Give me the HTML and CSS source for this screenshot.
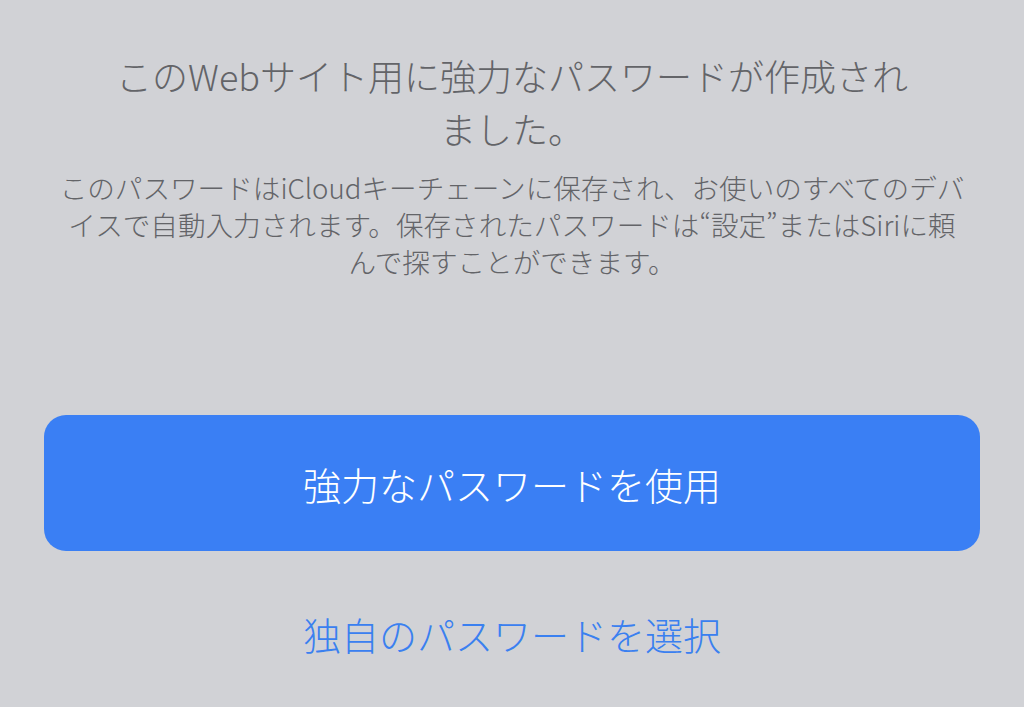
FILE: index.html
```html
<!DOCTYPE html>
<html lang="ja">
<head>
    <meta charset="UTF-8">
    <meta name="viewport" content="width=device-width, initial-scale=1.0">
    <title>強力なパスワード</title>
    <link rel="stylesheet" href="styles.css">
</head>
<body>
    <div class="sheet">
        <div class="message">
            <h1 class="title">このWebサイト用に強力なパスワードが作成され<br>ました。</h1>
            <p class="detail">このパスワードはiCloudキーチェーンに保存され、お使いのすべてのデバ<br>イスで自動入力されます。保存されたパスワードは“設定”またはSiriに頼<br>んで探すことができます。</p>
        </div>
        <div class="actions">
            <button class="primary">強力なパスワードを使用</button>
            <button class="link">独自のパスワードを選択</button>
        </div>
    </div>
</body>
</html>
```

FILE: styles.css
```css
body, html {
    height: 100%;
    margin: 0;
    padding: 0;
    font-family: "Noto Sans CJK JP", "Noto Sans", sans-serif;
    background-color: #d1d2d6;
}
.sheet {
    display: flex;
    flex-direction: column;
    height: 100%;
    box-sizing: border-box;
    padding: 49px 44px 0;
}
.message {
    text-align: center;
    color: #636468;
}
.title {
    margin: 0;
    font-size: 36px;
    font-weight: 300;
    line-height: 53px;
}
.detail {
    margin: 14px 0 0;
    font-size: 27.6px;
    font-weight: 300;
    line-height: 37px;
}
.actions {
    display: flex;
    flex-direction: column;
    margin-top: 135px;
}
button {
    font-family: inherit;
    border: none;
    cursor: pointer;
}
.primary {
    height: 136px;
    background-color: #3a7ff4;
    color: #fff;
    font-size: 38px;
    font-weight: 300;
    border-radius: 22px;
}
.link {
    margin-top: 56px;
    background: none;
    color: #3a80f0;
    font-size: 38px;
    font-weight: 300;
    line-height: 54px;
    padding: 0;
}
```
